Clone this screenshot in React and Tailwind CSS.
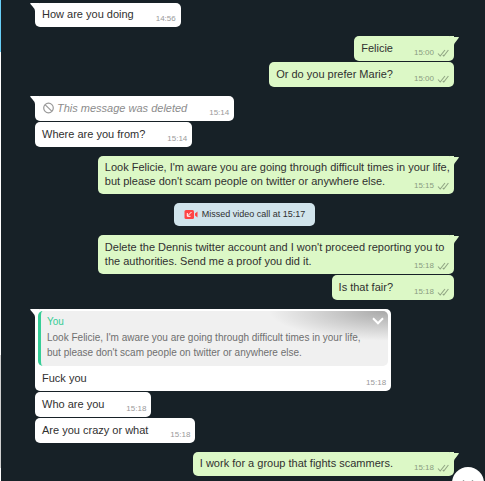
import React from "react";

function Ticks() {
  return (
    <svg className="h-2 w-3 shrink-0" viewBox="0 0 12 8" fill="none" stroke="#91a584" strokeWidth="1.1" aria-label="Delivered">
      <path d="M1 4.5 L3.2 7 L8 1 M5.8 6 L6.8 7 L11.4 1" />
    </svg>
  );
}

function Tail({ side }) {
  return side === "in" ? (
    <svg className="absolute -left-[5px] top-0 h-2 w-[9px]" viewBox="0 0 9 8" aria-hidden="true">
      <path d="M0.6 0 H9 V8 H5 Q4.6 5.6 2.6 3.6 L0.4 1 Q0 0 0.6 0Z" fill="#fff" />
    </svg>
  ) : (
    <svg className="absolute -right-[5px] top-0 h-[9px] w-[9px]" viewBox="0 0 9 9" aria-hidden="true">
      <path d="M0 0 H4 V1 H8.6 Q9.2 1 8.6 2 L6 5.4 Q4.2 7 4 9 H0Z" fill="#dcf8c6" />
    </svg>
  );
}

function Meta({ time, out }) {
  return (
    <span className="absolute bottom-1 right-[5px] flex items-center gap-[3px] text-[8px] leading-[9px]">
      <time className={out ? "text-[#8a9c80]" : "text-[#9a9a9a]"}>{time}</time>
      {out && <Ticks />}
    </span>
  );
}

function Message({ out, tail, time, tight, className = "", quote, children }) {
  return (
    <div
      className={`relative rounded-[5px] text-[11px] leading-[14px] text-[#303030] ${
        out ? "self-end bg-[#dcf8c6]" : "self-start bg-white"
      } ${className}`}
    >
      {tail && <Tail side={out ? "out" : "in"} />}
      {quote}
      <p className={`relative pb-[6px] pl-[7px] ${tight ? "pt-1" : "pt-[5px]"}`}>{children}</p>
      <Meta time={time} out={out} />
    </div>
  );
}

function Quote() {
  return (
    <div className="relative px-[3px] pt-[2px]">
      <blockquote className="relative overflow-hidden rounded-[5px] border-l-[3px] border-[#35cd96] bg-[#f0f0f0] pb-[6px] pl-[6px] pt-[3px] text-[10px] leading-[15px] text-[#6f6f6f]">
        <div className="absolute right-0 top-0 h-[30px] w-[120px] bg-[radial-gradient(ellipse_at_top_right,#a8a8a8_0%,#f0f0f0_70%)]" />
        <div className="relative">
          <p className="mb-px text-[#35cd96]">You</p>
          <p>Look Felicie, I'm aware you are going through difficult times in your life,</p>
          <p>but please don't scam people on twitter or anywhere else.</p>
        </div>
        <button type="button" aria-label="Message options" className="absolute right-[4px] top-[6px]">
          <svg className="h-2 w-3" viewBox="0 0 12 8" fill="none" stroke="#fff" strokeWidth="2">
            <path d="M1 1.3 L6 6.3 L11 1.3" />
          </svg>
        </button>
      </blockquote>
    </div>
  );
}

export default function App() {
  return (
    <div className="relative flex min-h-screen overflow-hidden bg-[#172127] font-['Liberation_Sans',Arial,sans-serif]">
      <div className="flex w-px shrink-0 flex-col">
        <div className="h-[52px] bg-[#68cff8]" />
        <div className="h-[303px] bg-white" />
        <div className="h-[113px] bg-[#d0d0d0]" />
        <div className="grow bg-white" />
      </div>
      <main className="flex grow flex-col gap-[9px] pb-[5px] pl-[34px] pr-[31px] pt-[3px]">
        <section className="flex flex-col">
          <Message tail tight time="14:56" className="pr-[47px]">How are you doing</Message>
        </section>
        <section className="flex flex-col gap-px">
          <Message out tail time="15:00" className="pr-[61px]">Felicie</Message>
          <Message out time="15:00" className="pr-[61px]">Or do you prefer Marie?</Message>
        </section>
        <section className="flex flex-col gap-px">
          <Message tail time="15:14" className="pr-[47px]">
            <span className="flex items-center gap-[3px] italic text-[#8c8c8c]">
              <svg className="h-3 w-3" viewBox="0 0 12 12" fill="none" stroke="#999" strokeWidth="1.2" aria-hidden="true">
                <circle cx="6.5" cy="6" r="4.8" />
                <path d="M3 2.6 L10 9.4" />
              </svg>
              This message was deleted
            </span>
          </Message>
          <Message time="15:14" className="pr-[47px]">Where are you from?</Message>
        </section>
        <section className="flex flex-col">
          <Message out tail tight time="15:15" className="w-[85%]">
            <span className="block w-fit">Look Felicie, I'm aware you are going through difficult times in your life,</span>
            <span className="block w-fit">but please don't scam people on twitter or anywhere else.</span>
          </Message>
        </section>
        <div className="flex items-center gap-1 self-center rounded-[5px] bg-[#d1e4ec] px-[10px] py-[5px] text-[9px] leading-[13px] text-[#303030]">
          <svg className="h-[9px] w-[14px]" viewBox="0 0 14 9" aria-hidden="true">
            <rect x="0.5" width="9.5" height="9" rx="1.5" fill="#ff4545" />
            <path d="M13.5 1.5 V7.5 L11 5.5 V3.5Z" fill="#ff4545" />
            <path d="M7.5 2 L3.5 6 M3.3 3 V6.3 H6.5" stroke="#fff" fill="none" />
          </svg>
          Missed video call at 15:17
        </div>
        <section className="flex flex-col gap-px">
          <Message out tail time="15:18" className="w-[85%]">
            <span className="block w-fit">Delete the Dennis twitter account and I won't proceed reporting you to</span>
            <span className="block w-fit">the authorities. Send me a proof you did it.</span>
          </Message>
          <Message out time="15:18" className="pr-[61px]">Is that fair?</Message>
        </section>
        <section className="flex flex-col gap-px">
          <Message tail time="15:18" className="w-[85%]" quote={<Quote />}>Fuck you</Message>
          <Message time="15:18" className="pr-[47px]">Who are you</Message>
          <Message time="15:18" className="pr-[47px]">Are you crazy or what</Message>
        </section>
        <section className="flex flex-col">
          <Message out tail tight time="15:18" className="pr-[61px]">I work for a group that fights scammers.</Message>
        </section>
      </main>
      <button type="button" aria-label="Scroll to latest" className="absolute -bottom-[18px] right-px flex size-8 items-start justify-center rounded-full bg-white pt-[13px]">
        <svg className="h-2 w-3" viewBox="0 0 12 8" fill="none" stroke="#888" strokeWidth="1.5">
          <path d="M1 0.5 L6 5.5 L11 0.5" />
        </svg>
      </button>
    </div>
  );
}
